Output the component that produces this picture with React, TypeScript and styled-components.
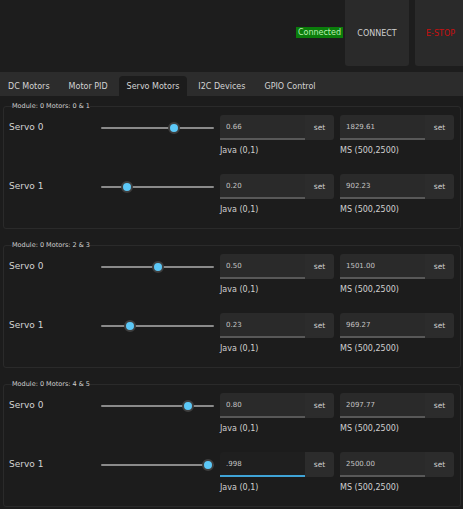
import React, { FC } from 'react';
import styled, { createGlobalStyle } from 'styled-components';

const GlobalStyle = createGlobalStyle`
    html, body {
        margin: 0;
        padding: 0;
        background: #1c1c1c;
    }
    body {
        font-family: "DejaVu Sans", "Liberation Sans", sans-serif;
        color: #d6d6d6;
        overflow: hidden;
    }
`;

const Wrapper = styled.div`
    width: 463px;
    height: 509px;
    overflow: hidden;
    background: #1c1c1c;
`;

const Header = styled.header`
    height: 72px;
    display: flex;
    align-items: flex-start;
    justify-content: flex-end;
    gap: 6px;
    margin-right: -16px;
    background: #1d1d1d;
`;

const Status = styled.span`
    align-self: center;
    margin-top: -8px;
    margin-right: -4px;
    padding: 0 2px;
    height: 11px;
    line-height: 11px;
    font-size: 8px;
    color: #b8f0b0;
    background: #0b7d0b;
`;

const BigButton = styled.button<{ $danger?: boolean }>`
    width: 64px;
    height: 66px;
    border: none;
    border-radius: 0 0 3px 3px;
    background: #2a2a2a;
    font-family: inherit;
    font-size: 8px;
    color: ${p => (p.$danger ? '#c81010' : '#cfcfcf')};
    padding: 0;
    padding-right: ${p => (p.$danger ? '13px' : '0')};
`;

const TabBar = styled.nav`
    height: 24px;
    display: flex;
    align-items: flex-end;
    gap: 3px;
    background: #2c2c2c;
`;

const Tab = styled.div<{ $active?: boolean }>`
    height: 20px;
    padding: 0 8px;
    display: flex;
    align-items: center;
    font-size: 8px;
    color: #d4d4d4;
    border-radius: 4px 4px 0 0;
    background: ${p => (p.$active ? '#1c1c1c' : 'transparent')};
`;

const Content = styled.main`
    padding: 6px 3px 0 3px;
    display: flex;
    flex-direction: column;
    gap: 12px;
`;

const Group = styled.fieldset`
    margin: 0;
    padding: 5px 6px 13px 5px;
    border: 1px solid #2a2a2a;
    border-radius: 3px;
    display: flex;
    flex-direction: column;
    gap: 18px;
`;

const Legend = styled.legend`
    font-size: 6.5px;
    line-height: 8px;
    padding: 0;
    margin-left: 3px;
    color: #d0d0d0;
`;

const Row = styled.div`
    display: grid;
    grid-template-columns: 86px 113px 114px 114px;
    column-gap: 6px;
    align-items: start;
`;

const ServoLabel = styled.span`
    height: 25px;
    line-height: 25px;
    font-size: 9px;
    color: #d4d4d4;
`;

const Slider = styled.input`
    -webkit-appearance: none;
    appearance: none;
    width: 113px;
    height: 25px;
    margin: 0;
    background: transparent;

    &::-webkit-slider-runnable-track {
        height: 2px;
        background: #8a8a8a;
        border-radius: 1px;
    }
    &::-webkit-slider-thumb {
        -webkit-appearance: none;
        width: 12px;
        height: 12px;
        margin-top: -5px;
        border-radius: 50%;
        background: #5cc8f7;
        border: 2.5px solid #3e3e3e;
        box-sizing: border-box;
    }
`;

const Field = styled.div`
    display: flex;
    flex-direction: column;
`;

const InputRow = styled.div`
    display: flex;
    height: 25px;
`;

const ValueInput = styled.input<{ $focused?: boolean }>`
    width: 85px;
    box-sizing: border-box;
    margin: 0;
    padding: 0 6px;
    border: none;
    border-bottom: 2px solid ${p => (p.$focused ? '#3fa3d6' : '#585858')};
    border-radius: 3px 0 0 0;
    background: ${p => (p.$focused ? '#1f1f1f' : '#2a2a2a')};
    font-family: inherit;
    font-size: 7px;
    color: #c4c4c4;
    outline: none;
`;

const SetButton = styled.button`
    width: 29px;
    padding: 0;
    border: none;
    border-radius: 0 3px 3px 0;
    background: #2c2c2c;
    font-family: inherit;
    font-size: 7.5px;
    color: #cfcfcf;
`;

const Caption = styled.span`
    margin-top: 6px;
    line-height: 10px;
    font-size: 8px;
    color: #d0d0d0;
`;

type Servo = { name: string; java: string; ms: string; focused?: boolean };
type Module = { title: string; servos: Servo[] };

const modules: Module[] = [
    {
        title: 'Module: 0 Motors: 0 & 1',
        servos: [
            { name: 'Servo 0', java: '0.66', ms: '1829.61' },
            { name: 'Servo 1', java: '0.20', ms: '902.23' },
        ],
    },
    {
        title: 'Module: 0 Motors: 2 & 3',
        servos: [
            { name: 'Servo 0', java: '0.50', ms: '1501.00' },
            { name: 'Servo 1', java: '0.23', ms: '969.27' },
        ],
    },
    {
        title: 'Module: 0 Motors: 4 & 5',
        servos: [
            { name: 'Servo 0', java: '0.80', ms: '2097.77' },
            { name: 'Servo 1', java: '.998', ms: '2500.00', focused: true },
        ],
    },
];

const tabs = ['DC Motors', 'Motor PID', 'Servo Motors', 'I2C Devices', 'GPIO Control'];

const ValueField: FC<{ value: string; caption: string; focused?: boolean }> = ({ value, caption, focused }) => (
    <Field>
        <InputRow>
            <ValueInput defaultValue={value} $focused={focused} />
            <SetButton>set</SetButton>
        </InputRow>
        <Caption>{caption}</Caption>
    </Field>
);

const ServoRow: FC<{ servo: Servo }> = ({ servo }) => (
    <Row>
        <ServoLabel>{servo.name}</ServoLabel>
        <Slider type="range" min={0} max={1} step={0.001} defaultValue={parseFloat(servo.java)} />
        <ValueField value={servo.java} caption="Java (0,1)" focused={servo.focused} />
        <ValueField value={servo.ms} caption="MS (500,2500)" />
    </Row>
);

const App: FC = () => {
    return (
        <Wrapper>
            <GlobalStyle />
            <Header>
                <Status>Connected</Status>
                <BigButton>CONNECT</BigButton>
                <BigButton $danger>E-STOP</BigButton>
            </Header>
            <TabBar>
                {tabs.map(t => (
                    <Tab key={t} $active={t === 'Servo Motors'}>{t}</Tab>
                ))}
            </TabBar>
            <Content>
                {modules.map(m => (
                    <Group key={m.title}>
                        <Legend>{m.title}</Legend>
                        {m.servos.map(s => (
                            <ServoRow key={s.name} servo={s} />
                        ))}
                    </Group>
                ))}
            </Content>
        </Wrapper>
    );
};

export default App;
